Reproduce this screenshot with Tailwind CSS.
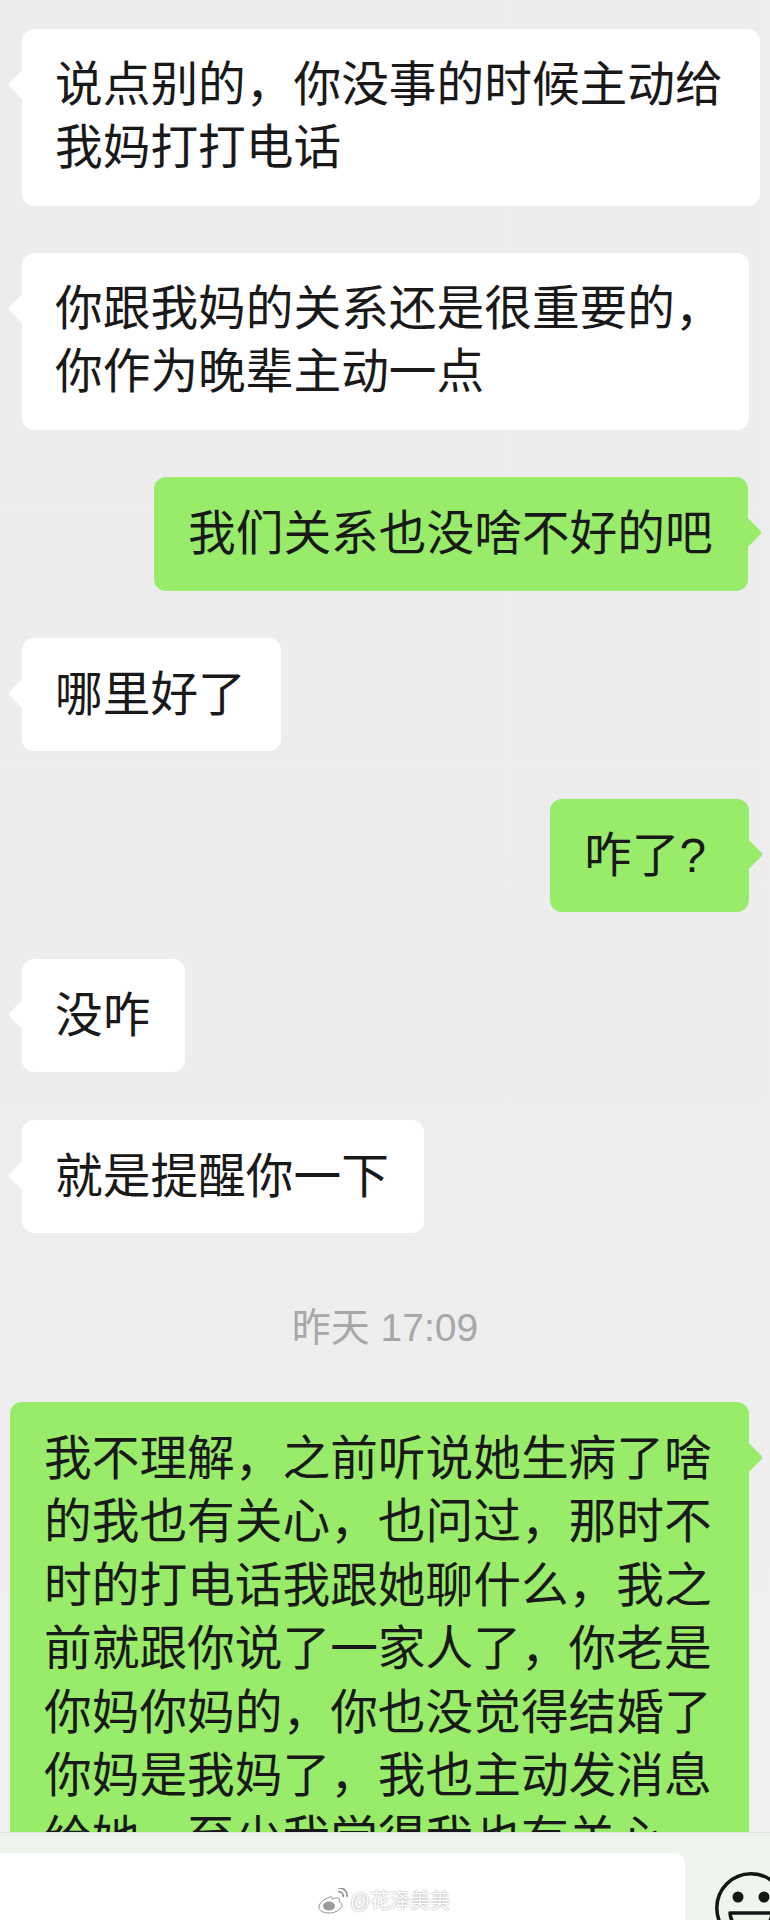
<!DOCTYPE html>
<html lang="zh-CN">
<head>
    <meta charset="UTF-8">
    <title>聊天记录</title>
    <script src="https://cdn.jsdelivr.net/npm/@tailwindcss/browser@4"></script>
</head>
<body class="bg-[#ededed] font-['Liberation_Sans','Noto_Sans_CJK_SC',sans-serif] text-[#191919]">
<div class="w-[770px] h-[1920px] overflow-hidden flex flex-col">
    <!-- Messages -->
    <div class="h-[1832px] shrink-0 overflow-hidden pt-[29px] bg-gradient-to-b from-[#ededed] from-60% to-[#f0f0f0] text-[47.7px] leading-[63.4px]">
        <div class="relative w-[738px] h-[177px] ml-[22px] pl-[33px] pt-[24px] bg-white rounded-[12px] whitespace-nowrap">
            <span class="absolute left-[-10px] top-[45px] w-[21px] h-[21px] rotate-45 rounded-[3px] bg-white"></span>
            <p class="relative">说点别的，你没事的时候主动给<br>我妈打打电话</p>
        </div>
        <div class="relative w-[727px] h-[177px] mt-[47px] ml-[22px] pl-[33px] pt-[24px] bg-white rounded-[12px] whitespace-nowrap">
            <span class="absolute left-[-10px] top-[45px] w-[21px] h-[21px] rotate-45 rounded-[3px] bg-white"></span>
            <p class="relative">你跟我妈的关系还是很重要的，<br>你作为晚辈主动一点</p>
        </div>
        <div class="relative w-[594px] h-[114px] mt-[47px] ml-[154px] pl-[34px] pt-[25px] bg-[#98ec6a] rounded-[12px] whitespace-nowrap">
            <span class="absolute right-[-10px] top-[45px] w-[21px] h-[21px] rotate-45 rounded-[3px] bg-[#98ec6a]"></span>
            <p class="relative">我们关系也没啥不好的吧</p>
        </div>
        <div class="relative w-[259px] h-[113px] mt-[47px] ml-[22px] pl-[33px] pt-[25px] bg-white rounded-[12px] whitespace-nowrap">
            <span class="absolute left-[-10px] top-[45px] w-[21px] h-[21px] rotate-45 rounded-[3px] bg-white"></span>
            <p class="relative">哪里好了</p>
        </div>
        <div class="relative w-[199px] h-[113px] mt-[48px] ml-[550px] pl-[34px] pt-[25px] bg-[#98ec6a] rounded-[12px] whitespace-nowrap">
            <span class="absolute right-[-10px] top-[45px] w-[21px] h-[21px] rotate-45 rounded-[3px] bg-[#98ec6a]"></span>
            <p class="relative">咋了?</p>
        </div>
        <div class="relative w-[163px] h-[113px] mt-[47px] ml-[22px] pl-[33px] pt-[25px] bg-white rounded-[12px] whitespace-nowrap">
            <span class="absolute left-[-10px] top-[45px] w-[21px] h-[21px] rotate-45 rounded-[3px] bg-white"></span>
            <p class="relative">没咋</p>
        </div>
        <div class="relative w-[402px] h-[113px] mt-[48px] ml-[22px] pl-[33px] pt-[25px] bg-white rounded-[12px] whitespace-nowrap">
            <span class="absolute left-[-10px] top-[45px] w-[21px] h-[21px] rotate-45 rounded-[3px] bg-white"></span>
            <p class="relative">就是提醒你一下</p>
        </div>
        <p class="mt-[70px] h-[50px] text-center text-[39px] leading-[50px] text-[#a8a8a8]">昨天 17:09</p>
        <div class="relative w-[739px] h-[520px] mt-[49px] ml-[10px] pl-[34px] pt-[25px] bg-[#98ec6a] rounded-[12px] whitespace-nowrap">
            <span class="absolute right-[-10px] top-[45px] w-[21px] h-[21px] rotate-45 rounded-[3px] bg-[#98ec6a]"></span>
            <p class="relative">我不理解，之前听说她生病了啥<br>的我也有关心，也问过，那时不<br>时的打电话我跟她聊什么，我之<br>前就跟你说了一家人了，你老是<br>你妈你妈的，你也没觉得结婚了<br>你妈是我妈了，我也主动发消息<br>给她，至少我觉得我也有关心</p>
        </div>
    </div>
    <!-- Input bar -->
    <div class="relative h-[88px] shrink-0 border-t border-[#e0e4dd] bg-[#eff4ec] pt-[20px] flex">
        <div class="w-[685px] h-[70px] bg-white rounded-tr-[10px]"></div>
        <svg class="absolute left-[714px] top-[38px]" width="74" height="74" viewBox="0 0 74 74">
            <circle cx="37" cy="37" r="34.2" fill="none" stroke="#151515" stroke-width="3.5"/>
            <circle cx="24" cy="26" r="5.5" fill="#151515"/>
            <circle cx="50" cy="26" r="5.5" fill="#151515"/>
            <path d="M16 42H58C57 54 48 62 37 62S17 54 16 42Z" fill="none" stroke="#151515" stroke-width="3.5" stroke-linejoin="round"/>
        </svg>
        <!-- Watermark -->
        <div class="absolute left-[318px] top-[55px] flex items-center gap-[2px] text-white text-[20px] leading-[26px] blur-[0.5px] [text-shadow:0_0_2px_#8a8a8a]">
            <svg width="30" height="26" viewBox="0 0 30 26" fill="#fff" stroke="#8f8f8f" stroke-width="1">
                <path d="M12 9C6 11 1 15 1 19c0 4 5 6 10 6 7 0 13-4 13-8 0-2-2-3-3-3 1-3 0-5-3-4-2 0-3 1-4 1 0-3-1-3-2-2Z"/>
                <ellipse cx="11" cy="18" rx="6" ry="4.5" fill="#9a9a9a" stroke="none"/>
                <path d="M20 4c3-1 6 2 5 5M20 0c6-1 10 4 9 9" fill="none" stroke-width="1.6"/>
            </svg>
            <span>@花泽美美</span>
        </div>
    </div>
</div>
</body>
</html>
